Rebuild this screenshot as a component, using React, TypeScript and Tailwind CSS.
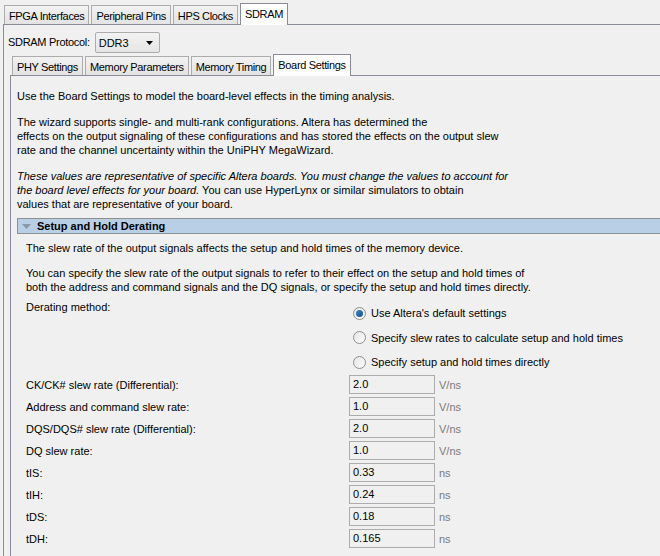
import React from 'react';

const font = { fontFamily: '"Liberation Sans", Arial, sans-serif' };

const Tab: React.FC<{ label: string; active?: boolean }> = ({ label, active }) =>
  active ? (
    <div className="relative -mb-px h-[22px] border border-b-0 border-[#898c95] bg-white px-[4px] pt-[3px] leading-[14px] tracking-[-0.35px]">
      {label}
    </div>
  ) : (
    <div className="mt-[2px] h-[19px] border border-b-0 border-[#acacac] bg-gradient-to-b from-[#f2f2f2] to-[#e3e3e3] px-[4px] pt-[3px] leading-[14px] tracking-[-0.35px]">
      {label}
    </div>
  );

const Radio: React.FC<{ checked?: boolean }> = ({ checked }) => (
  <span className="flex h-[13px] w-[13px] items-center justify-center rounded-full border border-[#8e8f8f] bg-gradient-to-br from-[#e6e6e6] to-[#fbfbfb]">
    {checked && <span className="h-[7px] w-[7px] rounded-full bg-gradient-to-br from-[#3a87c8] to-[#16508a]" />}
  </span>
);

const rows = [
  ['CK/CK# slew rate (Differential):', '2.0', 'V/ns'],
  ['Address and command slew rate:', '1.0', 'V/ns'],
  ['DQS/DQS# slew rate (Differential):', '2.0', 'V/ns'],
  ['DQ slew rate:', '1.0', 'V/ns'],
  ['tIS:', '0.33', 'ns'],
  ['tIH:', '0.24', 'ns'],
  ['tDS:', '0.18', 'ns'],
  ['tDH:', '0.165', 'ns'],
];

export default function App() {
  return (
    <div className="h-[556px] w-[660px] overflow-hidden bg-[#f0f0f0] text-[11px] text-black" style={font}>
      {/* outer tabs */}
      <div className="flex items-end gap-[2px] pl-[4px] pt-[3px]">
        <Tab label="FPGA Interfaces" />
        <Tab label="Peripheral Pins" />
        <Tab label="HPS Clocks" />
        <Tab label="SDRAM" active />
      </div>
      <div className="ml-[3px] border-l border-t border-[#898c95] pl-[4px]">
        <div className="flex items-center gap-[3px] pt-[7px]">
          <span className="tracking-[-0.3px]">SDRAM Protocol:</span>
          <div className="ml-[2px] flex h-[21px] w-[65px] items-center justify-between rounded-[2px] border border-[#acacac] bg-gradient-to-b from-[#f2f2f2] to-[#e5e5e5] pl-[3px] pr-[6px]">
            <span className="pt-[2px]">DDR3</span>
            <svg width="7" height="4" viewBox="0 0 7 4">
              <path d="M0 0h7L3.5 4z" fill="#000" />
            </svg>
          </div>
        </div>

        {/* inner tabs */}
        <div className="mt-[1px] flex items-end gap-[2px] pl-[4px]">
          <Tab label="PHY Settings" />
          <Tab label="Memory Parameters" />
          <Tab label="Memory Timing" />
          <Tab label="Board Settings" active />
        </div>
        <div className="ml-[2px] h-[500px] border-l border-t border-[#898c95] pl-[6px] pt-[13px] leading-[14px]">
          <p>Use the Board Settings to model the board-level effects in the timing analysis.</p>
          <p className="mt-[12px]">
            The wizard supports single- and multi-rank configurations. Altera has determined the
            <br />
            effects on the output signaling of these configurations and has stored the effects on the output slew
            <br />
            rate and the channel uncertainty within the UniPHY MegaWizard.
          </p>
          <p className="mt-[12px]">
            <i>
              These values are representative of specific Altera boards. You must change the values to account for
              <br />
              the board level effects for your board.
            </i>{' '}
            You can use HyperLynx or similar simulators to obtain
            <br />
            values that are representative of your board.
          </p>

          <div className="mt-[7px] flex h-[16px] w-[660px] items-center border border-[#8e8f8f] bg-[#b8cfe5] pl-[4px]">
            <svg width="9" height="5" viewBox="0 0 9 5">
              <path d="M0 0h9L4.5 5z" fill="#8a99a8" />
            </svg>
            <span className="ml-[6px] font-bold">Setup and Hold Derating</span>
          </div>

          <div className="pl-[9px]">
            <p className="mt-[7px]">The slew rate of the output signals affects the setup and hold times of the memory device.</p>
            <p className="mt-[11px]">
              You can specify the slew rate of the output signals to refer to their effect on the setup and hold times of
              <br />
              both the address and command signals and the DQ signals, or specify the setup and hold times directly.
            </p>

            <div className="mt-[6px] flex">
              <span className="w-[327px]">Derating method:</span>
              <div className="flex flex-col gap-[10.5px] pt-[6px]">
                {[
                  ["Use Altera's default settings", true],
                  ['Specify slew rates to calculate setup and hold times', false],
                  ['Specify setup and hold times directly', false],
                ].map(([l, c]) => (
                  <label key={l as string} className="flex items-center gap-[5px]">
                    <Radio checked={c as boolean} />
                    <span>{l as string}</span>
                  </label>
                ))}
              </div>
            </div>

            <div className="mt-[6px] flex flex-col gap-[3px]">
              {rows.map(([l, v, u]) => (
                <div key={l} className="flex items-center">
                  <span className="w-[323px]">{l}</span>
                  <div className="h-[19px] w-[86px] border border-[#acacac] pl-[3px] leading-[17px]">{v}</div>
                  <span className="ml-[4px] text-[#7a7a7a]">{u}</span>
                </div>
              ))}
            </div>
          </div>
        </div>
      </div>
    </div>
  );
}
